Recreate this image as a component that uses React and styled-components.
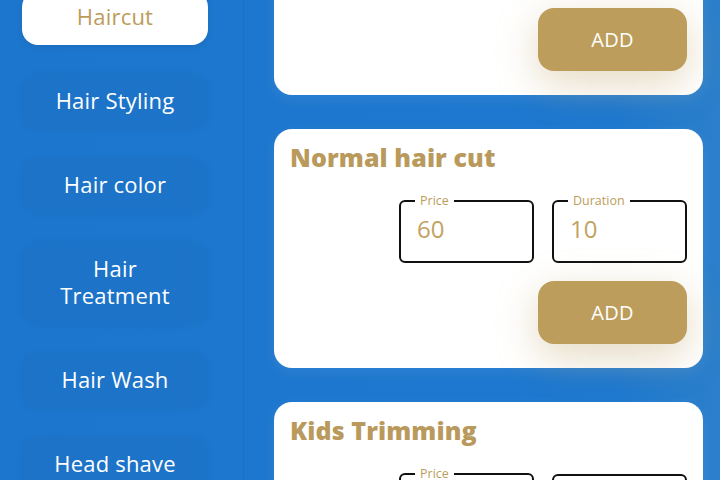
import React from "react";
import styled, { createGlobalStyle } from "styled-components";

const Global = createGlobalStyle`
  html, body { margin: 0; padding: 0; }
  body {
    width: 720px; height: 480px; overflow: hidden;
    background: #1e77ce;
    font-family: "Open Sans", "Noto Sans", sans-serif;
  }
`;

const Page = styled.div`
  display: flex;
  width: 720px;
  height: 480px;
  overflow: hidden;
  background: linear-gradient(90deg, #1d76cd 0%, #1e78cf 85%, #2b7fcb 100%);
`;

const Sidebar = styled.nav`
  width: 244px;
  flex: none;
  border-right: 1px solid rgba(0, 0, 0, 0.06);
  display: flex;
  flex-direction: column;
  gap: 30px;
  padding: 0 0 0 22px;
  margin-top: -9px;
  box-sizing: border-box;
`;

const NavItem = styled.div`
  width: 186px;
  box-sizing: border-box;
  padding: 12px 8px 15px;
  border-radius: 16px;
  text-align: center;
  font-size: 22px;
  line-height: 27px;
  letter-spacing: 0.2px;
  color: ${(p) => (p.$active ? "#bc9c5b" : "#ffffff")};
  background: ${(p) => (p.$active ? "#ffffff" : "rgba(0, 0, 0, 0.025)")};
  box-shadow: ${(p) =>
    p.$active ? "0 2px 6px rgba(0,0,0,0.08)" : "0 0 10px rgba(0, 0, 0, 0.04)"};
`;

const Main = styled.main`
  flex: 1;
  display: flex;
  flex-direction: column;
  gap: 34px;
  padding: 0 17px 0 30px;
  margin-top: -144px;
`;

const Card = styled.section`
  background: #ffffff;
  border-radius: 18px;
  padding: 14px 16px 24px;
  display: flex;
  flex-direction: column;
  box-shadow: 0 4px 14px rgba(255, 255, 255, 0.08);
`;

const Title = styled.h2`
  margin: 0;
  font-size: 25px;
  line-height: 29px;
  font-weight: 800;
  color: #b99a5c;
  letter-spacing: 0.1px;
`;

const Fields = styled.div`
  display: flex;
  justify-content: flex-end;
  gap: 18px;
  margin-top: 21px;
`;

const Field = styled.fieldset`
  width: 135px;
  height: ${(p) => (p.$empty ? "62px" : "70px")};
  margin: ${(p) => (p.$empty ? "8px 0 0" : "0")};
  box-sizing: border-box;
  padding: 0 16px;
  border: 2px solid #111111;
  border-radius: 6px;
  display: flex;
  align-items: center;
`;

const Legend = styled.legend`
  padding: 0 5px;
  margin-left: -2px;
  font-size: 12.5px;
  line-height: 16px;
  color: #bc9c5b;
`;

const Value = styled.span`
  font-size: 24px;
  color: #c2a262;
  margin-top: -14px;
`;

const Placeholder = styled.span`
  font-size: 18px;
  color: #9a8a6a;
`;

const Actions = styled.div`
  display: flex;
  justify-content: flex-end;
  margin-top: 18px;
`;

const AddButton = styled.button`
  width: 149px;
  height: 63px;
  border: none;
  border-radius: 16px;
  background: #bd9d5b;
  color: #ffffff;
  font-family: inherit;
  font-size: 20px;
  letter-spacing: 0.3px;
  box-shadow: 0 12px 40px rgba(190, 160, 100, 0.4);
`;

const categories = [
  "Haircut",
  "Hair Styling",
  "Hair color",
  "Hair Treatment",
  "Hair Wash",
  "Head shave",
];

const services = [
  { name: "Classic hair cut", price: 50, duration: 15 },
  { name: "Normal hair cut", price: 60, duration: 10 },
  { name: "Kids Trimming", price: 40, duration: null },
];

function InputField({ label, value }) {
  if (value === null || value === undefined) {
    return (
      <Field $empty>
        <Placeholder>{label}</Placeholder>
      </Field>
    );
  }
  return (
    <Field>
      <Legend>{label}</Legend>
      <Value>{value}</Value>
    </Field>
  );
}

function ServiceCard({ s }) {
  return (
    <Card>
      <Title>{s.name}</Title>
      <Fields>
        <InputField label="Price" value={s.price} />
        <InputField label="Duration" value={s.duration} />
      </Fields>
      <Actions>
        <AddButton>ADD</AddButton>
      </Actions>
    </Card>
  );
}

export default function App() {
  return (
    <>
      <Global />
      <Page>
        <Sidebar>
          {categories.map((c, i) => (
            <NavItem key={c} $active={i === 0}>
              {c === "Hair Treatment" ? (
                <>
                  Hair
                  <br />
                  Treatment
                </>
              ) : (
                c
              )}
            </NavItem>
          ))}
        </Sidebar>
        <Main>
          {services.map((s) => (
            <ServiceCard key={s.name} s={s} />
          ))}
        </Main>
      </Page>
    </>
  );
}
